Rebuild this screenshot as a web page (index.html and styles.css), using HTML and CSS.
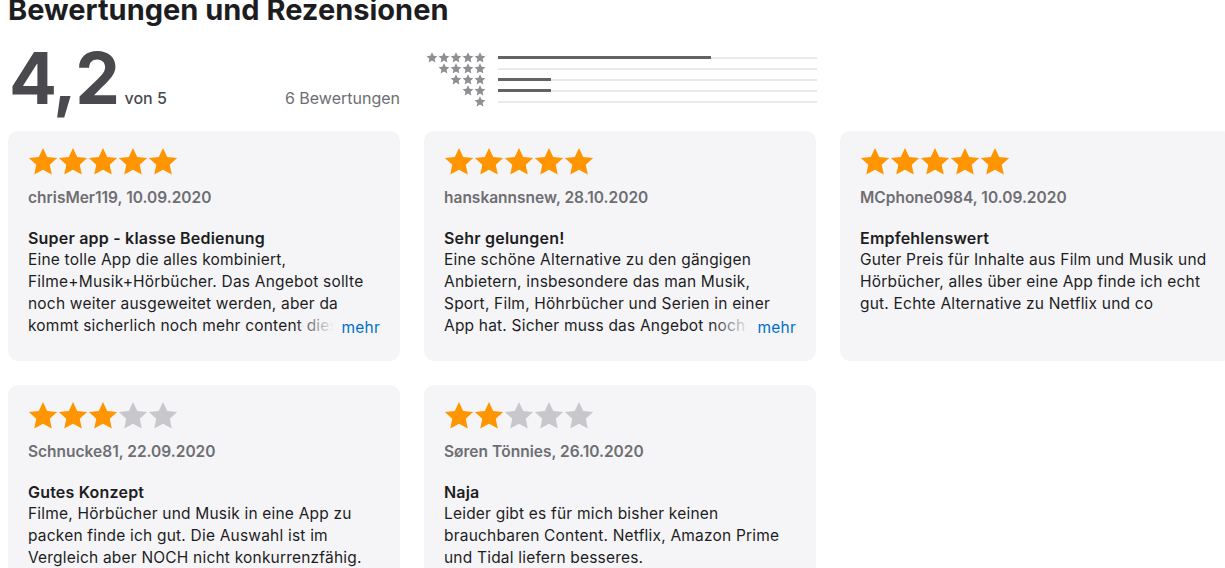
FILE: index.html
```html
<!DOCTYPE html>
<html lang="de">
<head>
<meta charset="utf-8">
<title>Bewertungen und Rezensionen</title>
<link rel="stylesheet" href="styles.css">
</head>
<body>
<svg class="defs" width="0" height="0" aria-hidden="true">
  <symbol id="star" viewBox="0 0 24 23">
    <path d="M12 0.6l3.4 7.2 7.9 0.9-5.9 5.4 1.6 7.8L12 18l-7 3.9 1.6-7.8L0.7 8.7l7.9-0.9z"/>
  </symbol>
</svg>
<main class="page">
  <h1 class="title">Bewertungen und Rezensionen</h1>

  <section class="summary-row">
    <div class="summary">
      <div class="score">
        <span class="score-num">4,2</span>
        <span class="score-of">von 5</span>
      </div>
      <span class="count">6 Bewertungen</span>
    </div>
    <div class="histogram">
      <div class="hist-row">
        <span class="hist-stars"><svg><use href="#star"/></svg><svg><use href="#star"/></svg><svg><use href="#star"/></svg><svg><use href="#star"/></svg><svg><use href="#star"/></svg></span>
        <span class="bar"><span class="fill" style="width:66.7%"></span></span>
      </div>
      <div class="hist-row">
        <span class="hist-stars"><svg><use href="#star"/></svg><svg><use href="#star"/></svg><svg><use href="#star"/></svg><svg><use href="#star"/></svg></span>
        <span class="bar"><span class="fill" style="width:0%"></span></span>
      </div>
      <div class="hist-row">
        <span class="hist-stars"><svg><use href="#star"/></svg><svg><use href="#star"/></svg><svg><use href="#star"/></svg></span>
        <span class="bar"><span class="fill" style="width:16.7%"></span></span>
      </div>
      <div class="hist-row">
        <span class="hist-stars"><svg><use href="#star"/></svg><svg><use href="#star"/></svg></span>
        <span class="bar"><span class="fill" style="width:16.7%"></span></span>
      </div>
      <div class="hist-row">
        <span class="hist-stars"><svg><use href="#star"/></svg></span>
        <span class="bar"><span class="fill" style="width:0%"></span></span>
      </div>
    </div>
  </section>

  <section class="reviews">
    <article class="card">
      <div class="stars"><svg class="on"><use href="#star"/></svg><svg class="on"><use href="#star"/></svg><svg class="on"><use href="#star"/></svg><svg class="on"><use href="#star"/></svg><svg class="on"><use href="#star"/></svg></div>
      <div class="author">chrisMer119, 10.09.2020</div>
      <h3 class="rev-title">Super app - klasse Bedienung</h3>
      <div class="body clamp">
        <p>Eine tolle App die alles kombiniert, Filme+Musik+Hörbücher. Das Angebot sollte noch weiter ausgeweitet werden, aber da kommt sicherlich noch mehr content dieses Jahr hinzu.</p>
        <span class="more"><a href="#">mehr</a></span>
      </div>
    </article>

    <article class="card">
      <div class="stars"><svg class="on"><use href="#star"/></svg><svg class="on"><use href="#star"/></svg><svg class="on"><use href="#star"/></svg><svg class="on"><use href="#star"/></svg><svg class="on"><use href="#star"/></svg></div>
      <div class="author">hanskannsnew, 28.10.2020</div>
      <h3 class="rev-title">Sehr gelungen!</h3>
      <div class="body clamp">
        <p>Eine schöne Alternative zu den gängigen Anbietern, insbesondere das man Musik, Sport, Film, Höhrbücher und Serien in einer App hat. Sicher muss das Angebot noch erweitert werden.</p>
        <span class="more"><a href="#">mehr</a></span>
      </div>
    </article>

    <article class="card">
      <div class="stars"><svg class="on"><use href="#star"/></svg><svg class="on"><use href="#star"/></svg><svg class="on"><use href="#star"/></svg><svg class="on"><use href="#star"/></svg><svg class="on"><use href="#star"/></svg></div>
      <div class="author">MCphone0984, 10.09.2020</div>
      <h3 class="rev-title">Empfehlenswert</h3>
      <div class="body">
        <p>Guter Preis für Inhalte aus Film und Musik und Hörbücher, alles über eine App finde ich echt gut. Echte Alternative zu Netflix und co</p>
      </div>
    </article>

    <article class="card">
      <div class="stars"><svg class="on"><use href="#star"/></svg><svg class="on"><use href="#star"/></svg><svg class="on"><use href="#star"/></svg><svg class="off"><use href="#star"/></svg><svg class="off"><use href="#star"/></svg></div>
      <div class="author">Schnucke81, 22.09.2020</div>
      <h3 class="rev-title">Gutes Konzept</h3>
      <div class="body">
        <p>Filme, Hörbücher und Musik in eine App zu packen finde ich gut. Die Auswahl ist im Vergleich aber NOCH nicht konkurrenzfähig.</p>
      </div>
    </article>

    <article class="card">
      <div class="stars"><svg class="on"><use href="#star"/></svg><svg class="on"><use href="#star"/></svg><svg class="off"><use href="#star"/></svg><svg class="off"><use href="#star"/></svg><svg class="off"><use href="#star"/></svg></div>
      <div class="author">Søren Tönnies, 26.10.2020</div>
      <h3 class="rev-title">Naja</h3>
      <div class="body">
        <p>Leider gibt es für mich bisher keinen brauchbaren Content. Netflix, Amazon Prime und Tidal liefern besseres.</p>
      </div>
    </article>
  </section>
</main>
</body>
</html>
```

FILE: styles.css
```css
html, body {
  margin: 0;
  padding: 0;
  overflow: hidden;
  background: #ffffff;
}

body {
  font-family: Inter, "Noto Sans", "Liberation Sans", sans-serif;
  color: #1d1d1f;
  -webkit-font-smoothing: antialiased;
}

.defs {
  position: absolute;
  width: 0;
  height: 0;
}

.page {
  padding-left: 8px;
  width: 1300px;
}

.title {
  margin: -7px 0 0 0;
  font-size: 29px;
  line-height: 34px;
  font-weight: 700;
  letter-spacing: 0;
  color: #1d1d1f;
}

.summary-row {
  display: grid;
  grid-template-columns: 392px 393px;
  column-gap: 24px;
  margin-top: 16px;
  height: 71px;
}

.summary {
  display: flex;
  align-items: baseline;
  justify-content: space-between;
}

.score {
  display: flex;
  align-items: baseline;
  gap: 6px;
}

.score-num {
  font-size: 71px;
  line-height: 71px;
  font-weight: 700;
  letter-spacing: -1.5px;
  color: #4a4a4e;
  margin-left: 1px;
}

.score-of {
  font-size: 16px;
  font-weight: 500;
  color: #4a4a4e;
}

.count {
  font-size: 16px;
  color: #6e6e73;
}

.histogram {
  display: flex;
  flex-direction: column;
  padding-top: 9px;
}

.hist-row {
  display: flex;
  align-items: center;
  height: 11px;
  gap: 12px;
}

.hist-stars {
  width: 62px;
  display: flex;
  justify-content: flex-end;
}

.hist-stars svg {
  width: 12px;
  height: 11px;
  fill: #8e8e93;
}

.bar {
  display: block;
  flex: 0 0 319px;
  height: 2px;
  background: #e9e9ee;
  position: relative;
}

.fill {
  display: block;
  position: absolute;
  left: 0;
  top: -1px;
  height: 3px;
  background: #636366;
}

.reviews {
  display: grid;
  grid-template-columns: repeat(3, 392px);
  grid-auto-rows: 230px;
  gap: 24px;
  margin-top: 17px;
}

.card {
  background: #f5f5f7;
  border-radius: 10px;
  padding: 16px 20px 0 20px;
  box-sizing: border-box;
}

.stars {
  display: flex;
  height: 29px;
}

.stars svg {
  width: 30px;
  height: 29px;
}

.stars .on { fill: #ff9500; }
.stars .off { fill: #c7c7cc; }

.author {
  margin-top: 12px;
  font-size: 15.5px;
  line-height: 20px;
  font-weight: 600;
  color: #6e6e73;
}

.rev-title {
  margin: 19px 0 0 0;
  font-size: 16px;
  line-height: 22px;
  font-weight: 600;
  letter-spacing: 0.2px;
  color: #1d1d1f;
}

.body {
  position: relative;
  font-size: 15.5px;
  line-height: 22px;
  letter-spacing: 0.2px;
  color: #1d1d1f;
}

.body p {
  margin: 0;
}

.clamp {
  height: 88px;
  overflow: hidden;
}

.more {
  position: absolute;
  right: 0;
  bottom: 0;
  height: 22px;
  padding-left: 48px;
  background: linear-gradient(to right, rgba(245, 245, 247, 0) 0, #f5f5f7 40px);
}

.more a {
  display: inline-block;
  padding-top: 2px;
  color: #0070c9;
  text-decoration: none;
}
```
